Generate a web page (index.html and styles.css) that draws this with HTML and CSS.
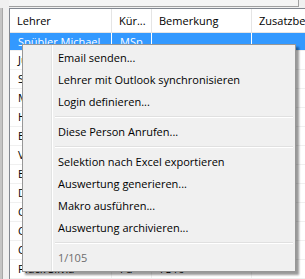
FILE: index.html
```html
<!DOCTYPE html>
<html lang="de">
<head>
    <meta charset="UTF-8">
    <title>Lehrer</title>
    <link rel="stylesheet" href="styles.css">
</head>
<body>
    <div class="window">
        <div class="topbar">
            <div class="topbox"></div>
        </div>
        <div class="main">
            <div class="side"></div>
            <div class="list">
                <div class="row header">
                    <div class="cell">Lehrer</div>
                    <div class="cell">Kür...</div>
                    <div class="cell">Bemerkung</div>
                    <div class="cell">Zusatzbemerkung</div>
                </div>
                <div class="row selected">
                    <div class="cell">Spübler Michael</div>
                    <div class="cell">MSp</div>
                    <div class="cell"></div>
                    <div class="cell"></div>
                </div>
                <!-- rows hidden behind the menu, only the first letter shows -->
                <div class="row"><div class="cell">Jung</div><div class="cell"></div><div class="cell"></div><div class="cell"></div></div>
                <div class="row"><div class="cell">Senn</div><div class="cell"></div><div class="cell"></div><div class="cell"></div></div>
                <div class="row"><div class="cell">Moser</div><div class="cell"></div><div class="cell"></div><div class="cell"></div></div>
                <div class="row"><div class="cell">Hess</div><div class="cell"></div><div class="cell"></div><div class="cell"></div></div>
                <div class="row"><div class="cell">Egli</div><div class="cell"></div><div class="cell"></div><div class="cell"></div></div>
                <div class="row"><div class="cell">Vogt</div><div class="cell"></div><div class="cell"></div><div class="cell"></div></div>
                <div class="row"><div class="cell">Erni</div><div class="cell"></div><div class="cell"></div><div class="cell"></div></div>
                <div class="row"><div class="cell">Dürr</div><div class="cell"></div><div class="cell"></div><div class="cell"></div></div>
                <div class="row"><div class="cell">Conti</div><div class="cell"></div><div class="cell"></div><div class="cell"></div></div>
                <div class="row"><div class="cell">Curti</div><div class="cell"></div><div class="cell"></div><div class="cell"></div></div>
                <div class="row"><div class="cell">Cina</div><div class="cell"></div><div class="cell"></div><div class="cell"></div></div>
                <div class="row"><div class="cell">Pfäck Silvia</div><div class="cell">Fd</div><div class="cell">F310</div><div class="cell"></div></div>
            </div>
        </div>

        <div class="menu">
            <div class="item">Email senden...</div>
            <div class="item">Lehrer mit Outlook synchronisieren</div>
            <div class="item">Login definieren...</div>
            <div class="sep"></div>
            <div class="item">Diese Person Anrufen...</div>
            <div class="sep"></div>
            <div class="item">Selektion nach Excel exportieren</div>
            <div class="item">Auswertung generieren...</div>
            <div class="item">Makro ausführen...</div>
            <div class="item">Auswertung archivieren...</div>
            <div class="sep"></div>
            <div class="item disabled">1/105</div>
        </div>
    </div>
</body>
</html>
```

FILE: styles.css
```css
body {
    margin: 0;
    background: #f0f0f0;
    font-family: 'Open Sans', 'Noto Sans', sans-serif;
    font-size: 11px;
    color: #000;
}

.window {
    position: relative;
    width: 305px;
    height: 279px;
    overflow: hidden;
}

.topbar {
    height: 8px;
}

.topbox {
    margin-left: 9px;
    width: 289px;
    height: 6px;
    border-bottom: 1px solid #a0a0a0;
    border-right: 1px solid #a0a0a0;
    background: #f4f4f4;
}

.main {
    display: flex;
    height: 271px;
}

.side {
    width: 9px;
    border-left: 2px solid #c4c4c4;
    box-sizing: border-box;
    background: linear-gradient(to right, #a8a8a8 1px, #f0f0f0 1px);
}

.list {
    flex: 1;
    background: #fff;
    border-left: 1px solid #828790;
    border-top: 1px solid #828790;
    overflow: hidden;
}

.row {
    display: grid;
    grid-template-columns: 102px 40px 100px 120px;
    height: 19px;
    border-bottom: 1px solid #f0f0f0;
    box-sizing: border-box;
}

.cell {
    padding-left: 8px;
    line-height: 18px;
    white-space: nowrap;
    overflow: hidden;
    border-right: 1px solid #f0f0f0;
}

.header {
    height: 24px;
    border-bottom: 1px solid #e5e5e5;
}

.header .cell {
    padding-left: 7px;
    line-height: 23px;
    border-right-color: #e5e5e5;
}

.selected {
    background: #3399ff;
    color: #fff;
    height: 18px;
}

.selected .cell {
    line-height: 17px;
    border-right-color: #fff;
}

.menu {
    position: absolute;
    left: 22px;
    top: 44px;
    width: 274px;
    height: 228px;
    box-sizing: border-box;
    padding: 2px;
    border: 1px solid #979797;
    background: linear-gradient(to right, transparent 28px, #e2e3e3 28px, #e2e3e3 29px, #fff 29px, #fff 30px, transparent 30px), #f0f0f0;
    box-shadow: 3px 3px 2px rgba(0, 0, 0, 0.4);
}

.item {
    height: 22px;
    line-height: 22px;
    padding-left: 33px;
    white-space: nowrap;
}

.item.disabled {
    color: #6d6d6d;
}

.sep {
    height: 8px;
    margin-left: 30px;
}

.sep::after {
    content: "";
    display: block;
    position: relative;
    top: 3px;
    height: 1px;
    border-top: 1px solid #e0e0e0;
    background: #fff;
}
```
